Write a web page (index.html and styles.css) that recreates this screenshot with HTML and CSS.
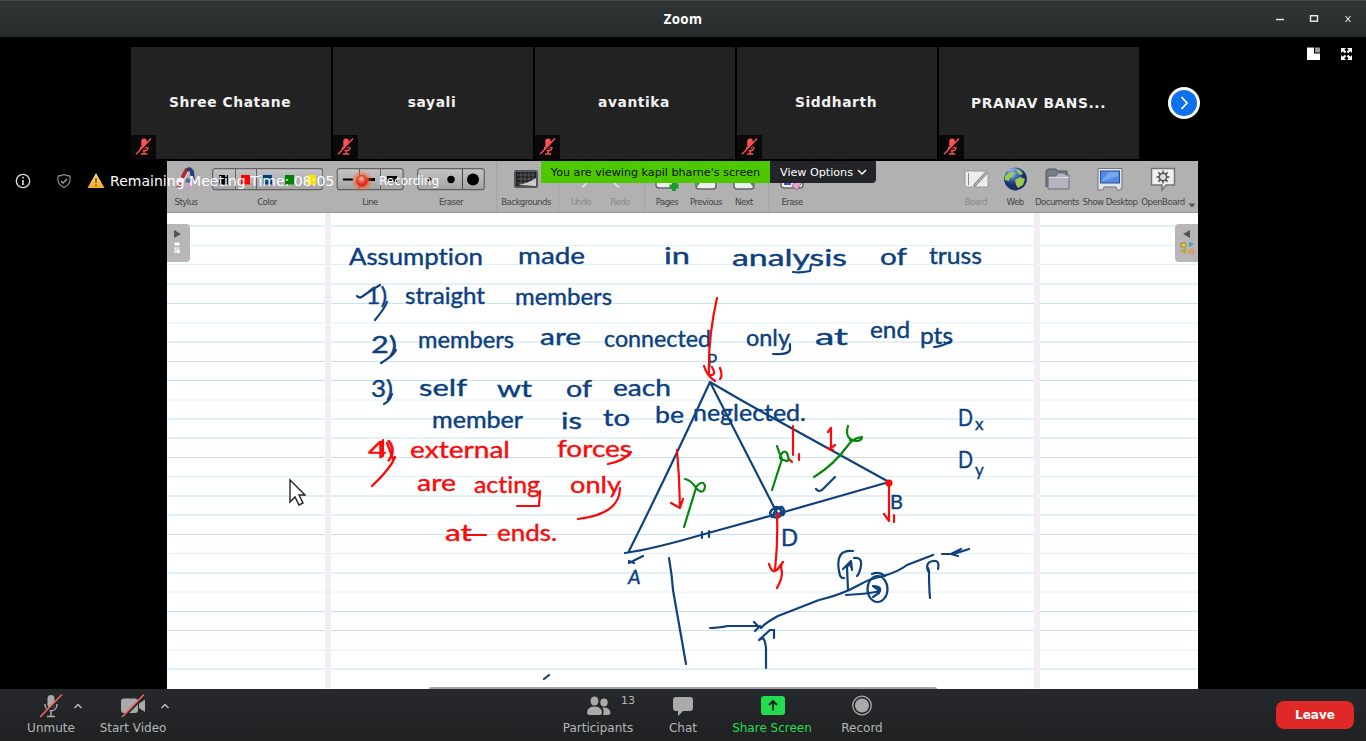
FILE: index.html
```html
<!DOCTYPE html>
<html lang="en">
<head>
<meta charset="utf-8">
<title>Zoom</title>
<link rel="stylesheet" href="styles.css">
</head>
<body>
<svg class="defs" width="0" height="0">
  <defs>
    <symbol id="muted" viewBox="0 0 24 24"><g fill="none" stroke="#ff5252" stroke-width="1.4"><rect x="9.800" y="3.500" width="5.500" height="10.500" rx="2.700" fill="#ff5252" stroke="none"/><path d="M9 12c0 5 7.500 5 7.500 0M12.600 15.500v3.500M9.500 19h6.300"/><path d="M5.800 19.800 20.500 3.500" stroke="#090909" stroke-width="2.200"/><path d="M4.500 19.300 19.500 3.500" stroke-width="1.400"/></g></symbol>
    <linearGradient id="btn" x2="0" y2="1"><stop stop-color="#c5c5c7"/><stop offset="1" stop-color="#a4a4a5"/></linearGradient>
    <radialGradient id="globe" cx=".35" cy=".25"><stop stop-color="#9bbcf5"/><stop offset=".55" stop-color="#3f67b1"/><stop offset="1" stop-color="#173069"/></radialGradient>
    <radialGradient id="glow"><stop offset=".5" stop-color="#ff5b29" stop-opacity=".7"/><stop offset="1" stop-color="#ff5b29" stop-opacity="0"/></radialGradient>
    <radialGradient id="rec" cx=".45" cy=".3"><stop stop-color="#ffd0c4"/><stop offset=".5" stop-color="#f6604e"/><stop offset="1" stop-color="#d8301f"/></radialGradient>
    <linearGradient id="warn" x2="0" y2="1"><stop stop-color="#ffdc83"/><stop offset="1" stop-color="#f2a629"/></linearGradient>
  </defs>
</svg>
<div class="window">
  <header class="titlebar">
    <span class="title">Zoom</span>
    <svg class="win-controls" width="90" height="20" viewBox="0 0 90 20" fill="none" stroke="#eee"><path d="M7 11.500h8" stroke-width="1.400"/><rect x="41.500" y="7.700" width="7" height="5.500" stroke-width="1.400"/><path d="M76.500 8l5 6M81.500 8l-5 6" stroke-width="1.100"/></svg>
  </header>
  <section class="strip">
    <div class="tile"><span>Shree Chatane</span><svg class="mic"><use href="#muted"/></svg></div>
    <div class="tile"><span>sayali</span><svg class="mic"><use href="#muted"/></svg></div>
    <div class="tile"><span>avantika</span><svg class="mic"><use href="#muted"/></svg></div>
    <div class="tile"><span>Siddharth</span><svg class="mic"><use href="#muted"/></svg></div>
    <div class="tile"><span>PRANAV BANS...</span><svg class="mic"><use href="#muted"/></svg></div>
    <button class="next"><svg width="12" height="18" viewBox="0 0 12 18"><path d="M3.500 3l5.500 6-5.500 6" fill="none" stroke="#fff" stroke-width="1.800"/></svg></button>
    <svg class="view-icons" width="50" height="16" viewBox="0 0 50 16"><path d="M1 1.500h7v6h6v6.500H1z" fill="#fff"/><path d="M9 1.500h5v5H9z" fill="#999"/><path d="M35 2h5l-1.700 1.700 2 2-1.600 1.600-2-2L35 7zM46 2h-5l1.700 1.700-2 2 1.600 1.600 2-2L46 7zM35 14h5l-1.700-1.700 2-2-1.600-1.600-2 2L35 9zM46 14h-5l1.700-1.700-2-2 1.600-1.600 2 2L46 9z" fill="#fff"/></svg>
  </section>
  <main class="share">
    <div class="board">
      <div class="toolbar">
        <div class="tool"><svg width="24" height="24" viewBox="0 0 24 24"><path d="M5 17 13 3" stroke="#eee" stroke-width="5"/><path d="M8 11 13 2" stroke="#b52635" stroke-width="4"/><path d="M13 3q4-2 5 2l1 9" fill="none" stroke="#273c7a" stroke-width="4"/><path d="M12 13 19 15" stroke="#5b5e9a" stroke-width="4"/><path d="M13 21 21 14" stroke="#c9a0cb" stroke-width="5"/><path d="M2 20l4-5 4 3-6 3z" fill="#c44653"/></svg><b>Stylus</b></div>
        <div class="tool"><svg width="112" height="24" viewBox="0 0 112 24"><rect x="1.700" y="1.700" width="110" height="21" rx="2.500" fill="url(#btn)" stroke="#626264" stroke-width="1.200"/><path d="M24.500 2v20M45.500 2v20" stroke="#626264"/><path d="M8 8h9v9.500H8z"/><path d="M30 8h9v9.500h-9z" fill="#f00"/><path d="M52 8h9v9.500h-9z" fill="#004080"/><path d="M74 8h9v9.500h-9z" fill="#008000"/><path d="M96 8h9v9.500h-9z" fill="#ffdf00"/></svg><b>Color</b></div>
        <div class="tool"><svg width="68" height="24" viewBox="0 0 68 24"><rect x="1.200" y="1.700" width="66" height="21" rx="2.500" fill="url(#btn)" stroke="#626264" stroke-width="1.200"/><path d="M23.500 2v20M44.500 2v20" stroke="#626264"/><path d="M7 12.500h10" stroke="#000" stroke-width="2"/><path d="M28 12.500h11" stroke="#000" stroke-width="3"/><path d="M51 12h10" stroke="#000" stroke-width="6"/></svg><b>Line</b></div>
        <div class="tool"><svg width="68" height="24" viewBox="0 0 68 24"><rect x=".7" y="1.700" width="66.600" height="21" rx="2.500" fill="url(#btn)" stroke="#626264" stroke-width="1.200"/><path d="M45.500 2v20" stroke="#444"/><circle cx="12.500" cy="12.500" r="2"/><circle cx="34" cy="12.500" r="3.700"/><circle cx="56" cy="12.500" r="6"/></svg><b>Eraser</b></div>
        <div class="tool sep"><svg width="26" height="24" viewBox="0 0 26 24"><rect x="2" y="4" width="22" height="16" rx="1" fill="#222" stroke="#53545d" stroke-width="2"/><path d="M4 8h18M4 12h18M4 16h18M8 5v14M12 5v14M16 5v14M20 5v14" stroke="#777" stroke-width=".6"/><path d="M5 18q11-2 18-7v8z" fill="#ccc"/></svg><b>Backgrounds</b></div>
        <div class="tool off sep undo"><svg width="24" height="24" viewBox="0 0 24 24"><path d="M9 6q11 0 9 9-1 3-5 5" fill="none" stroke="#ddd" stroke-width="2"/></svg><b>Undo</b></div>
        <div class="tool off"><svg width="24" height="24" viewBox="0 0 24 24"><path d="M15 6q-11 0-9 9 1 3 5 5" fill="none" stroke="#ddd" stroke-width="2"/></svg><b>Redo</b></div>
        <div></div>
        <div class="tool sep pages"><svg width="26" height="26" viewBox="0 0 26 26"><rect x="2" y="4" width="21" height="18" rx="3" fill="#eee" stroke="#666" stroke-width="1.500"/><path d="M20 16v9M15.500 20.500h9" stroke="#159a2b" stroke-width="4"/></svg><b>Pages</b></div>
        <div class="tool"><svg width="24" height="26" viewBox="0 0 24 26"><rect x="2" y="4" width="20" height="19" rx="3" fill="#eee" stroke="#666" stroke-width="1.500"/><path d="M3 21l7-10v-6H3z" fill="#1ca43a"/></svg><b>Previous</b></div>
        <div class="tool"><svg width="24" height="26" viewBox="0 0 24 26"><rect x="2" y="4" width="20" height="19" rx="3" fill="#eee" stroke="#666" stroke-width="1.500"/><path d="M21 21l-7-10v-6h7z" fill="#1ca43a"/></svg><b>Next</b></div>
        <div></div>
        <div class="tool sep erase"><svg width="26" height="26" viewBox="0 0 26 26"><rect x="2" y="4" width="22" height="18" rx="3" fill="#eee" stroke="#666" stroke-width="1.500"/><path d="M5 18h7" stroke="#4b54bb" stroke-width="2"/><path d="M13 20l6-8 5 3-6 9z" fill="#e7a3d3" stroke="#a86791"/></svg><b>Erase</b></div>
        <div></div>
        <div class="tool off"><svg width="26" height="24" viewBox="0 0 26 24"><rect x="2" y="4" width="23" height="16" rx="1" fill="#eee" stroke="#999"/><path d="M5.500 6v12" stroke="#888"/><path d="M11 19 24 5" stroke="#888" stroke-width="3"/><path d="M12 18 24 5" stroke="#ccc"/></svg><b>Board</b></div>
        <div class="tool"><svg width="26" height="26" viewBox="0 0 26 26"><circle cx="13.500" cy="13" r="11.400" fill="url(#globe)"/><path d="M3 10l5-4 4 1-1 4-3 1-1 3-4-1zM13 14l5-3 5 2-2 6-5 3-2-3zM14 4l5 1 2 3-4 1z" fill="#9bc94e"/><path d="M6 5q6-4 12 0" stroke="#eef" fill="none" opacity=".6"/></svg><b>Web</b></div>
        <div class="tool"><svg width="28" height="26" viewBox="0 0 28 26"><path d="M3 21V5l2-2h8l2 2h9v14" fill="#777b82" stroke="#555"/><path d="M5 23V10h8l2-3h7l1 2h3v14z" fill="#b2b5be" stroke="#686b73"/><path d="M6 11.500h20" stroke="#ddd"/></svg><b>Documents</b></div>
        <div class="tool"><svg width="28" height="26" viewBox="0 0 28 26"><path d="M2 2.500h24v17.500l-1 4h-4l-1-3H8l-1 3H2z" fill="#e4e4e8" stroke="#73757d"/><rect x="4.500" y="5" width="19" height="12" fill="#528be4" stroke="#295399"/><path d="M5 16l8-10h9v4z" fill="#83b6f2" opacity=".7"/></svg><b>Show Desktop</b></div>
        <div class="tool"><svg width="28" height="26" viewBox="0 0 28 26"><path d="M2.500 2.500h23v16.500H17l-4 5v-5H2.500z" fill="#f0f0f0" stroke="#74747c" stroke-width="1.500"/><circle cx="14" cy="11" r="3.700" fill="#ddd" stroke="#555" stroke-width="1.600"/><path d="M14 4.500v3M14 14.500v3M7.500 11h3M17.500 11h3M9.400 6.400l2 2M16.600 13.600l2 2M18.600 6.400l-2 2M11.400 13.600l-2 2" stroke="#555" stroke-width="1.500"/></svg><b>OpenBoard</b></div>
        <div class="more"><svg width="8" height="5" viewBox="0 0 8 5"><path d="M.5.500h7L4 4.500z" fill="#555"/></svg></div>
      </div>
      <div class="paper">
        <svg class="ink" width="1031" height="475" viewBox="167 213 1031 475">
          <g class="rules"><path d="M167 226h1031M167 284h1031M167 303.500h1031M167 342h1031M167 361.500h1031M167 380.500h1031M167 419h1031M167 438h1031M167 457.500h1031M167 496h1031M167 515h1031M167 534.500h1031M167 573h1031M167 611.500h1031M167 630.500h1031M167 669h1031"/><path class="pale" d="M167 245.500h1031M167 264.500h1031M167 323h1031M167 400h1031M167 476.500h1031M167 553.500h1031M167 592h1031M167 650h1031"/></g>
          <path d="M325 213h6v475h-6zM1034 213h6v475h-6z" fill="#f1eff3"/>
          <g class="write blue">
            <text x="349" y="265" textLength="134" lengthAdjust="spacingAndGlyphs">Assumption</text><text x="518" y="264" textLength="67" lengthAdjust="spacingAndGlyphs">made</text><text x="664" y="264" textLength="26" lengthAdjust="spacingAndGlyphs">in</text><text x="732" y="266" textLength="115" lengthAdjust="spacingAndGlyphs">analysis</text><text x="880" y="265" textLength="27" lengthAdjust="spacingAndGlyphs">of</text><text x="929" y="264" textLength="53" lengthAdjust="spacingAndGlyphs">truss</text>
            <text x="366" y="304" textLength="21" lengthAdjust="spacingAndGlyphs">1)</text><text x="405" y="304" textLength="80" lengthAdjust="spacingAndGlyphs">straight</text><text x="515" y="305" textLength="97" lengthAdjust="spacingAndGlyphs">members</text>
            <text x="371" y="353" textLength="26" lengthAdjust="spacingAndGlyphs">2)</text><text x="418" y="348" textLength="96" lengthAdjust="spacingAndGlyphs">members</text><text x="540" y="345" textLength="41" lengthAdjust="spacingAndGlyphs">are</text><text x="604" y="347" textLength="107" lengthAdjust="spacingAndGlyphs">connected</text><text x="746" y="346" textLength="44" lengthAdjust="spacingAndGlyphs">only</text><text x="815" y="345" textLength="33" lengthAdjust="spacingAndGlyphs">at</text><text x="870" y="338" textLength="40" lengthAdjust="spacingAndGlyphs">end</text><text x="920" y="344" textLength="33" lengthAdjust="spacingAndGlyphs">pts</text>
            <text x="371" y="397" textLength="22" lengthAdjust="spacingAndGlyphs">3)</text><text x="419" y="396" textLength="48" lengthAdjust="spacingAndGlyphs">self</text><text x="497" y="397" textLength="35" lengthAdjust="spacingAndGlyphs">wt</text><text x="566" y="397" textLength="26" lengthAdjust="spacingAndGlyphs">of</text><text x="613" y="396" textLength="58" lengthAdjust="spacingAndGlyphs">each</text>
            <text x="432" y="428" textLength="91" lengthAdjust="spacingAndGlyphs">member</text><text x="561" y="429" textLength="21" lengthAdjust="spacingAndGlyphs">is</text><text x="603" y="426" textLength="27" lengthAdjust="spacingAndGlyphs">to</text><text x="655" y="423" textLength="29" lengthAdjust="spacingAndGlyphs">be</text><text x="693" y="421" textLength="113" lengthAdjust="spacingAndGlyphs">neglected.</text>
            <text x="707" y="367" class="small">P</text><text x="628" y="584" class="mid slant">A</text><text x="781" y="546" textLength="17" lengthAdjust="spacingAndGlyphs">D</text><text x="890" y="509" class="mid">B</text><text x="958" y="426" textLength="15" lengthAdjust="spacingAndGlyphs">D</text><text x="975" y="430" class="small">x</text><text x="958" y="468" textLength="15" lengthAdjust="spacingAndGlyphs">D</text><text x="975" y="476" class="small">y</text>
          </g>
          <g class="write red"><text x="368" y="458" textLength="27" lengthAdjust="spacingAndGlyphs">4)</text><text x="410" y="458" textLength="100" lengthAdjust="spacingAndGlyphs">external</text><text x="557" y="457" textLength="75" lengthAdjust="spacingAndGlyphs">forces</text><text x="417" y="491" textLength="39" lengthAdjust="spacingAndGlyphs">are</text><text x="474" y="493" textLength="66" lengthAdjust="spacingAndGlyphs">acting</text><text x="570" y="493" textLength="51" lengthAdjust="spacingAndGlyphs">only</text><text x="445" y="541" textLength="27" lengthAdjust="spacingAndGlyphs">at</text><text x="497" y="541" textLength="60" lengthAdjust="spacingAndGlyphs">ends.</text></g>
          <g class="stroke blue-line">
            <path d="M357 296q3 3 6 0 8-6 17-11M387 302q-2 6-12 18M396 350q-3 6-15 13M392 394q-2 7-8 10M793 272q8 1 17-1l1-6M773 354q15 1 17-4v-6M934 347q7 0 17-6"/>
            <path d="M629 551q38-76 81-169l67 131M710 382q27 16 54 31t125 69M625 553q28-4 76-18l76-21q56-16 112-32M702 532v6M709 531v6M669 558q3 17 4 32l13 74M629 563l14-7M629 561l5 2M816 489q3 4 7 0l12-12"/>
            <path d="M772 517q-4-5 1-8 3-4 7 0 4 5-1 8-7 2-5-4 3-6 8-6 4 5 1 8" stroke-width="2.500"/>
            <path d="M710 628q7 0 18-2 13 0 30 0l-4-4m6 4-5 5M761 628q4-5 17-12 13-5 41-16 22-5 40-15 10-6 24-9 15-4 24-11l26-10M766 668v-20q-1-8-3-10l-4 2 11-10h4v8M942 554h10q9-2 17-5M961 549l-10 5 7 2M930 598q-1-10-1-27l-1-3M928 571q-3-9 5-10 7-1 5 8M846 595l14-1q12-1 20-3l-7-5q10 0 6 7l-6 4"/>
            <ellipse cx="877.500" cy="589" rx="10" ry="13"/><path d="M853 551q-18-2-14 20 1 8 5 7M848 590l-1-23q4-5 4 0M843 569l8-8 1 9M854 558q8-1 7 7-1 8-4 11M544 679l5-4M872 574q7-3 13 2"/>
          </g>
          <g class="stroke red-line">
            <path d="M717 298q-9 40-8 75M704 366q3 10 11 15M712 367q5 9-2 8M720 368q3 8 0 11M677 450l2 28 1 30M671 503l9 5 3-9M793 426v29M789 459l3 3M799 454v6M831 428v20l4-3M833 450l-5-2M828 432l3-4M777 516q1 26-2 54M769 564q3 10 8 6l6-8q-3 2-1 11 0 6-5 15M889 484v37l-5-7M894 515v7M395 457q-4 11-23 29M383 440v16M387 443l6 16M540 491l-1 15h-22M620 488q0 26-42 31M608 464q16-3 23-12M466 535h20"/>
            <circle cx="889" cy="483" r="2.500"/><circle cx="778" cy="515" r="1"/>
          </g>
          <g class="stroke green-line"><path d="M684 527l12-39q-5-8-11-9M696 487q7-8 9-1-1 10-9 2M772 490l10-31q-3-6-5-13M780 457q3-8 7-4 4 11-3 7-4 0-4-3M814 477q20-12 35-33 5-6 13-7-1 6-12 3M848 426q-4 13 8 15"/></g>
        </svg>
        <div class="drawer left"><svg width="22" height="37"><path d="M7 6l7 4-7 4z" fill="#555"/><path d="M7 18h6v4H7zM7 23h6v7H7zM9 25h5v5H9z" fill="#fff" stroke="#aaa" stroke-width=".8"/></svg></div>
        <div class="drawer right"><svg width="23" height="37"><path d="M15 6l-7 4 7 4z" fill="#555"/><path d="M6 19h5v4H6z" fill="#edc34c" stroke="#aa861c"/><path d="M14 18l5 2-5 3z" fill="#37a7bf"/><path d="M11 24v6l-6-3z" fill="#b1ad35"/><circle cx="16.500" cy="27.500" r="2" fill="none" stroke="#f09040" stroke-width="1.500"/></svg></div>
        <div class="scroll"></div>
      </div>
      <div class="banner"><span class="viewing">You are viewing kapil bharne's screen</span><span class="options"><i>View Options</i><svg width="10" height="7" viewBox="0 0 10 7"><path d="M1 1l4 4 4-4" fill="none" stroke="#fff" stroke-width="1.500"/></svg></span></div>
    </div>
    <div class="status">
      <svg width="92" height="20" viewBox="0 0 92 20"><g fill="none" stroke="#ddd" stroke-width="1.300"><circle cx="8" cy="10" r="6.700"/><path d="M8 9v5M8 5.800v1.700" stroke-width="1.600"/><path d="M49 3.500q3 1.500 6 1.500v4.500q-.3 4-6 7-5.700-3-6-7V5q3 0 6-1.500z" stroke="#999" stroke-width="1.100"/><path d="M46 10l2 2 4-4" stroke="#aaa"/></g><path d="M81 2l8.500 15H72.500z" fill="url(#warn)"/><path d="M81 7v5M81 13.500v1.700" stroke="#705326" stroke-width="1.500"/></svg>
      <span class="remaining">Remaining Meeting Time: 08:05</span>
      <svg class="rec-dot" width="22" height="22"><circle cx="11" cy="11" r="11" fill="url(#glow)"/><circle cx="11" cy="11" r="5.500" fill="url(#rec)" stroke="#df4030"/></svg>
      <span class="recording">Recording</span>
    </div>
    <svg class="cursor" width="18" height="30" viewBox="0 0 18 30"><path d="M2 2v22l5-5 4 8 4-2-4-8h6z" fill="#fff" stroke="#222" stroke-width="1.400"/></svg>
  </main>
  <footer class="controls">
    <div class="ctl unmute"><svg width="28" height="26" viewBox="0 0 28 26"><rect x="10.500" y="2" width="7" height="13" rx="3.500" fill="#aaa"/><path d="M8 11c0 9 12 9 12 0M14 18v5M10 23.500h8" fill="none" stroke="#aaa" stroke-width="1.500"/><path d="M4 24.500 26 2" stroke="#242628" stroke-width="2.600"/><path d="M3 24 25 1.500" stroke="#ff6161" stroke-width="1.500"/></svg><span>Unmute</span></div>
    <div class="caret"><svg width="10" height="8" viewBox="0 0 10 8"><path d="M1.500 6 5 2.500 8.500 6" fill="none" stroke="#bbb" stroke-width="1.500"/></svg></div>
    <div class="ctl video"><svg width="30" height="26" viewBox="0 0 30 26"><rect x="3" y="5.500" width="17" height="14.500" rx="3" fill="#aaa"/><path d="M21 10.500l6-4v12.500l-6-4z" fill="#aaa"/><path d="M5 24.500 27 2" stroke="#242628" stroke-width="2.600"/><path d="M4 24 26 1.500" stroke="#ff6161" stroke-width="1.500"/></svg><span>Start Video</span></div>
    <div class="caret second"><svg width="10" height="8" viewBox="0 0 10 8"><path d="M1.500 6 5 2.500 8.500 6" fill="none" stroke="#bbb" stroke-width="1.500"/></svg></div>
    <div class="ctl people"><svg width="28" height="26" viewBox="0 0 28 26" fill="#aaa"><ellipse cx="10.500" cy="8" rx="4" ry="4.500"/><ellipse cx="20" cy="9.500" rx="3.700" ry="4"/><path d="M3 19q1-5.500 7.500-5.500T18 19q0 3-2 3H6q-3 0-3-3zM18.500 14.500q7-.5 8 5 0 2.500-3 2.500h-4.500q1.500-4-.5-7.500z"/></svg><em>13</em><span>Participants</span></div>
    <div class="ctl chat"><svg width="28" height="26" viewBox="0 0 28 26"><path d="M7 4h14q3 0 3 3v8q0 3-3 3h-7l-5 5v-5H7q-3 0-3-3V7q0-3 3-3z" fill="#aaa"/></svg><span>Chat</span></div>
    <div class="ctl screen"><svg width="28" height="26" viewBox="0 0 28 26"><rect x="3" y="3" width="24" height="19" rx="3" fill="#24dc50"/><path d="M15 17.500V8.500M11 12l4-4 4 4" fill="none" stroke="#222" stroke-width="1.800"/></svg><span>Share Screen</span></div>
    <div class="ctl record"><svg width="28" height="26" viewBox="0 0 28 26"><circle cx="14" cy="12.500" r="9.300" fill="none" stroke="#aaa" stroke-width="1.300"/><circle cx="14" cy="12.500" r="7" fill="#aaa"/></svg><span>Record</span></div>
    <button class="leave">Leave</button>
  </footer>
</div>
</body>
</html>
```
FILE: styles.css
```css
* { box-sizing: border-box; }
body { margin: 0; background: #000; color: #fff; font-family: "DejaVu Sans", sans-serif; font-size: 12px; }
svg { display: block; flex: none; }
button { border: 0; padding: 0; font-family: inherit; color: #fff; }
.defs { position: absolute; }
.window { width: 1366px; height: 741px; display: grid; grid-template-rows: 37px 124px 528px 52px; overflow: hidden; }
.titlebar { display: grid; grid-template-columns: 103px 1fr 103px; align-items: center; background: linear-gradient(#2f3435, #292d2e); border-top: 1px solid #424748; }
.title { grid-column: 2; text-align: center; font-family: "Noto Sans", sans-serif; font-size: 13.300px; font-weight: 700; letter-spacing: .3px; }
.win-controls { margin-left: 6px; margin-top: -3px; }
.strip { display: flex; align-items: flex-start; gap: 2px; padding: 10px 10px 0 131px; }
.tile { width: 200px; height: 112px; flex: none; background: #222; display: grid; grid-template-rows: 88px 24px; }
.tile span { align-self: end; height: 41px; margin-right: 2px; text-align: center; font-weight: 700; font-size: 13.800px; letter-spacing: .6px; color: #f2f2f2; }
.tile:nth-child(5) span { letter-spacing: .6px; height: 40px; margin-right: 1px; }
.mic { width: 25px; height: 24px; background: #090909; }
.next { width: 32px; height: 32px; margin: 40px 0 0 27px; border: 3px solid #fff; border-radius: 50%; background: #0e71eb; display: grid; place-items: center; }
.view-icons { margin: -1px 0 0 auto; }
.share { position: relative; padding-left: 167px; }
.board { position: relative; width: 1031px; height: 528px; display: grid; grid-template-rows: 52px 476px; background: #fff; }
.toolbar { display: grid; grid-template-columns: 38px 124px 82px 80px 70px 40px 38px 9px 38px 40px 36px 12px 36px 146px 40px 38px 46px 60px 46px 12px; background: #b2b1b2; border-bottom: 1px solid #969596; }
.tool { position: relative; display: grid; grid-template-rows: 34px 14px; align-content: start; justify-content: center; justify-items: center; align-items: center; }
.tool svg { margin-top: 2px; }
.tool b { font: 8.600px/12px "DejaVu Sans", sans-serif; letter-spacing: -.55px; color: #444; white-space: nowrap; }
.tool.off b { color: #888; }
.sep::before { content: ""; position: absolute; left: 5px; top: 0; height: 51px; border-left: 1px dotted #979797; }
.sep.undo::before { left: -3px; }
.sep.pages::before { left: -4px; }
.sep.erase::before { left: -6px; }
.more { display: grid; place-items: end center; padding-bottom: 4px; }
.paper { position: relative; background: #fff; }
.rules { stroke: #c4e3f0; stroke-width: 1; }
.rules .pale { stroke: #def1f9; }
.write { font: 23px Lato, sans-serif; font-variant-ligatures: none; stroke-width: .4; }
.write .small { font-size: 17px; }
.write .mid { font-size: 20px; }
.write .slant { font-style: italic; }
.blue { fill: #0b407f; stroke: #0b407f; }
.red { fill: #fa0b0b; stroke: #fa0b0b; }
.stroke { fill: none; stroke-width: 2.200; stroke-linecap: round; stroke-linejoin: round; }
.blue-line { stroke: #10417f; }
.red-line { stroke: #fb0808; }
.red-line circle { fill: #fb0808; }
.green-line { stroke: #07860c; }
.drawer { position: absolute; top: 11px; height: 38px; background: #b8b6b9; }
.left { left: 0; width: 23px; border-radius: 0 4px 4px 0; }
.right { right: 0; width: 23px; border-radius: 4px 0 0 4px; }
.scroll { position: absolute; left: 262px; bottom: 0; width: 508px; height: 2px; border-radius: 2px 2px 0 0; background: #a6a6a6; }
.banner { position: absolute; left: 374px; top: 0; width: 335px; height: 22px; display: flex; }
.viewing { width: 229px; line-height: 23px; text-align: center; background: #4cc700; color: #111; font-size: 11.150px; white-space: nowrap; }
.options { width: 106px; display: flex; align-items: center; justify-content: space-between; padding: 0 9px 0 10px; background: #222427; border-radius: 0 0 4px 0; }
.options i { font-style: normal; font-size: 11.150px; white-space: nowrap; }
.status { position: absolute; left: 15px; top: 9px; height: 22px; display: flex; align-items: center; }
.remaining { margin-left: 3px; width: 225px; font-size: 14px; letter-spacing: .03px; white-space: nowrap; }
.rec-dot { margin-left: 16px; }
.recording { margin-left: 6px; font-size: 12px; }
.cursor { position: absolute; left: 288px; top: 317px; }
.controls { display: flex; align-items: flex-start; background: linear-gradient(#26292b, #1f2123); padding-top: 4px; color: #b5b5b5; }
.ctl { position: relative; display: grid; grid-template-rows: 26px 18px; justify-items: center; white-space: nowrap; }
.ctl span { line-height: 19px; }
.ctl em { position: absolute; left: 60px; top: 1px; font: 11px "DejaVu Sans", sans-serif; }
.unmute { width: 50px; margin-left: 26px; }
.caret { margin: 9px 0 0 -3px; }
.video { width: 70px; margin-left: 15px; }
.caret.second { margin-left: -8px; }
.people { width: 74px; margin-left: 391px; }
.chat { width: 40px; margin-left: 28px; }
.screen { width: 84px; margin-left: 27px; color: #24dc50; }
.record { width: 46px; margin-left: 25px; }
.leave { width: 78px; height: 28px; margin: 8px 12px 0 auto; border-radius: 8px; background: #e02828; font-size: 12px; font-weight: 700; }
```
